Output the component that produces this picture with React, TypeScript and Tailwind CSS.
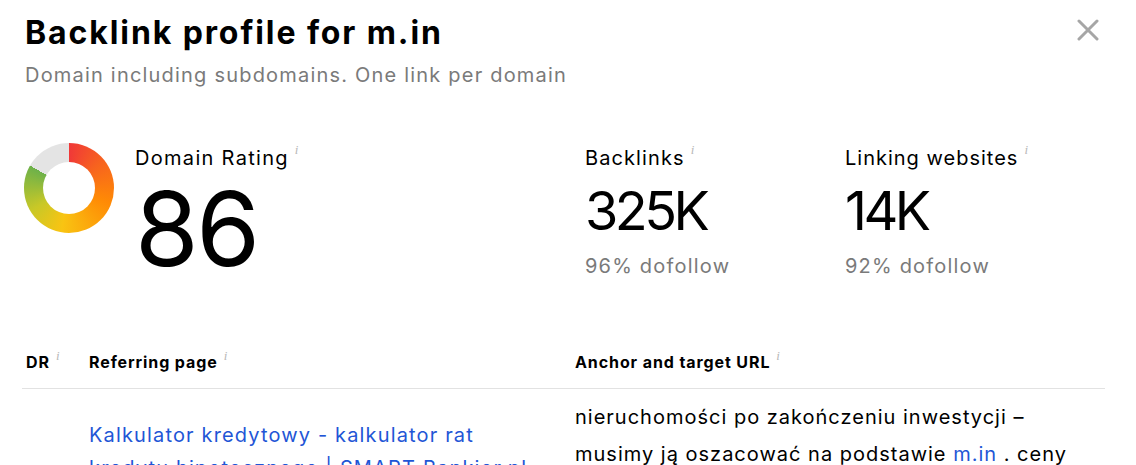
import React from "react";

const Info = () => (
  <span
    className="ml-[6px] text-[13px] leading-none italic text-[#b8b8b8] self-start -mt-[1px] tracking-normal font-normal"
    style={{ fontFamily: '"Liberation Serif", serif' }}
  >
    i
  </span>
);

export default function App() {
  return (
    <div
      className="relative w-[1136px] h-[465px] overflow-hidden bg-white text-black"
      style={{ fontFamily: 'Inter, "Noto Sans", sans-serif' }}
    >
      <button className="absolute right-[36px] top-[18px] w-[24px] h-[24px] flex items-center justify-center">
        <svg width="22" height="22" viewBox="0 0 22 22">
          <path d="M2 2 L20 20 M20 2 L2 20" stroke="#a6a6a6" strokeWidth="3" strokeLinecap="round" />
        </svg>
      </button>

      <div className="pl-[25px] pt-[12px]">
        <h1 className="text-[32px] leading-[42px] font-bold tracking-[1.9px]">Backlink profile for m.in</h1>
        <p className="text-[20px] leading-[28px] text-[#7a7a7a] mt-[7px] tracking-[1.2px]">
          Domain including subdomains. One link per domain
        </p>
      </div>

      <div className="flex pl-[24px] mt-[53px]">
        <div className="w-[561px] flex">
          <div
            className="w-[90px] h-[90px] rounded-full flex items-center justify-center shrink-0 mt-[1px]"
            style={{
              background:
                "conic-gradient(from 0deg, #f03838 0deg, #f7621f 50deg, #ff8a05 110deg, #f9c412 190deg, #c8c827 240deg, #6db14a 300deg, #e4e4e4 300deg, #e4e4e4 360deg)",
            }}
          >
            <div className="w-[52px] h-[52px] rounded-full bg-white" />
          </div>
          <div className="ml-[21px] flex flex-col">
            <div className="flex text-[20px] leading-[28px] mt-[2px] tracking-[1.3px]">
              Domain Rating
              <Info />
            </div>
            <div className="text-[103px] leading-[100px] mt-[7px] tracking-[-2.5px]">86</div>
          </div>
        </div>
        <div className="w-[260px] flex flex-col">
          <div className="flex text-[20px] leading-[28px] mt-[2px] tracking-[1.1px]">
            Backlinks
            <Info />
          </div>
          <div className="text-[54px] leading-[60px] mt-[9px] tracking-[-3.5px]">325K</div>
          <div className="text-[20px] leading-[28px] text-[#7a7a7a] mt-[11px] tracking-[1.2px]">96% dofollow</div>
        </div>
        <div className="flex flex-col">
          <div className="flex text-[20px] leading-[28px] mt-[2px] tracking-[1px]">
            Linking websites
            <Info />
          </div>
          <div className="text-[54px] leading-[60px] mt-[9px] tracking-[-3.5px]">14K</div>
          <div className="text-[20px] leading-[28px] text-[#7a7a7a] mt-[11px] tracking-[1.2px]">92% dofollow</div>
        </div>
      </div>

      <div className="mx-[22px] w-[1083px] mt-[70px]">
        <div className="flex border-b border-[#e2e2e2] h-[39px] items-start text-[16px] font-bold leading-[24px] tracking-[0.9px]">
          <div className="w-[63px] pl-[4px] flex">
            DR
            <Info />
          </div>
          <div className="w-[486px] pl-[4px] flex">
            Referring page
            <Info />
          </div>
          <div className="pl-[4px] flex">
            Anchor and target URL
            <Info />
          </div>
        </div>
        <div className="flex text-[20px]">
          <div className="w-[63px]" />
          <div className="w-[486px] pl-[4px] pt-[30px] leading-[33px] tracking-[1.15px]">
            <div className="w-[440px] text-[#1f56d6]">
              Kalkulator kredytowy - kalkulator rat kredytu hipotecznego | SMART Bankier.pl
            </div>
          </div>
          <div className="pl-[4px] pt-[10px] w-[500px] leading-[37px] tracking-[1px]">
            nieruchomości po zakończeniu inwestycji – musimy ją oszacować na podstawie{" "}
            <span className="text-[#1f56d6]">m.in</span> . ceny
          </div>
        </div>
      </div>
    </div>
  );
}
